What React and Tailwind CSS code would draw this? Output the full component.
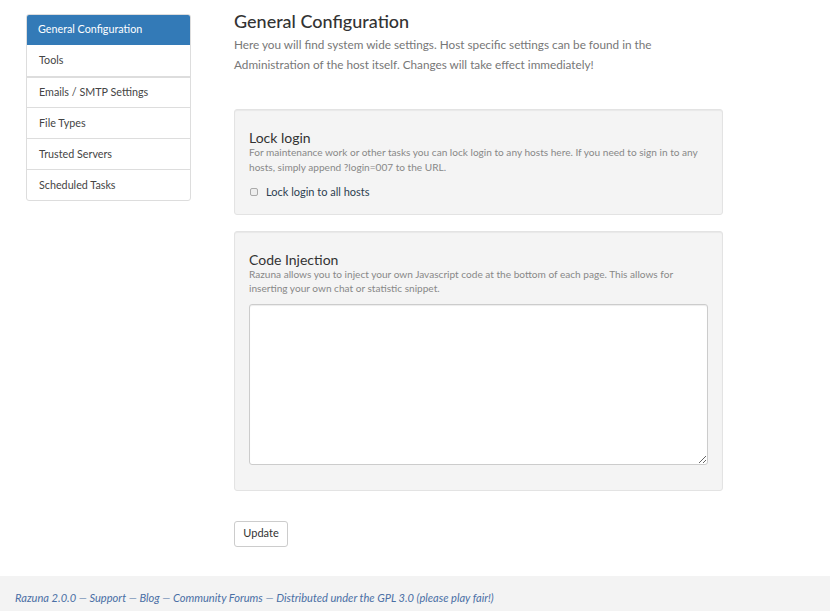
import React from "react";

const navItems = [
  "General Configuration",
  "Tools",
  "Emails / SMTP Settings",
  "File Types",
  "Trusted Servers",
  "Scheduled Tasks",
];

function Sidebar() {
  return (
    <div className="w-[165px] shrink-0 rounded-[3px] border border-[#dddddd] bg-white overflow-hidden">
      {navItems.map((item, i) => (
        <div
          key={item}
          className={
            i === 0
              ? "h-[31px] flex items-center px-[12px] text-[10.75px] text-white bg-[#337ab7] -m-px mb-0"
              : i === 2
              ? "h-[31px] flex items-center px-[12px] text-[10.75px] text-[#444] border-t-2 border-[#dddddd]"
              : i === 1
              ? "h-[31px] flex items-center px-[12px] text-[10.75px] text-[#444]"
              : "h-[31px] flex items-center px-[12px] text-[10.75px] text-[#444] border-t border-[#dddddd]"
          }
        >
          {item}
        </div>
      ))}
    </div>
  );
}

function Well({ children, className }) {
  return (
    <div
      className={
        "rounded-[3px] border border-[#e3e3e3] bg-[#f4f4f4] px-[14px] shadow-[inset_0_1px_1px_rgba(0,0,0,0.05)] " +
        className
      }
    >
      {children}
    </div>
  );
}

export default function App() {
  return (
    <div
      className="min-h-[611px] flex flex-col bg-white text-[#333]"
      style={{ fontFamily: "Lato, 'Open Sans', sans-serif" }}
    >
      <div className="flex items-start flex-1 pt-[14px] pl-[26px]">
        <Sidebar />
        <div className="ml-[43px] w-[489px]">
          <h1 className="text-[18px] leading-[16px] font-medium text-[#333] mt-[-1px]">
            General Configuration
          </h1>
          <p className="mt-[6px] text-[11.75px] leading-[20px] text-[#777]">
            Here you will find system wide settings. Host specific settings can
            be found in the Administration of the host itself. Changes will take
            effect immediately!
          </p>

          <Well className="mt-[34px] pt-[20px] pb-[13px]">
            <h4 className="text-[14px] leading-[15px] text-[#333]">Lock login</h4>
            <p className="text-[10.1px] leading-[14.5px] text-[#888]">
              For maintenance work or other tasks you can lock login to any
              hosts here. If you need to sign in to any hosts, simply append
              ?login=007 to the URL.
            </p>
            <label className="flex items-center mt-[10px] text-[11px] text-[#2c3e50]">
              <input
                type="checkbox"
                className="w-[8px] h-[8px] mr-[8px] ml-[1px] appearance-none border border-[#aaa] rounded-[2px] bg-[#eee]"
              />
              Lock login to all hosts
            </label>
          </Well>

          <Well className="mt-[16px] pt-[20px] pb-[25px]">
            <h4 className="text-[14px] leading-[15px] text-[#333]">Code Injection</h4>
            <p className="text-[10.1px] leading-[14.5px] text-[#888]">
              Razuna allows you to inject your own Javascript code at the bottom
              of each page. This allows for inserting your own chat or
              statistic snippet.
            </p>
            <textarea className="block mt-[8px] w-full h-[161px] rounded-[3px] border border-[#ccc] bg-white shadow-[inset_0_1px_1px_rgba(0,0,0,0.075)]" />
          </Well>

          <button className="mt-[30px] h-[26px] w-[54px] rounded-[3px] border border-[#ccc] bg-white text-[11px] text-[#333]">
            Update
          </button>
        </div>
      </div>
      <div className="mt-[29px] h-[35px] bg-[#f3f3f3] pt-[15px] pl-[15px] text-[11.1px] leading-[13px] italic text-[#4a6fa5]">
        Razuna 2.0.0 — Support — Blog — Community Forums — Distributed under
        the GPL 3.0 (please play fair!)
      </div>
    </div>
  );
}
